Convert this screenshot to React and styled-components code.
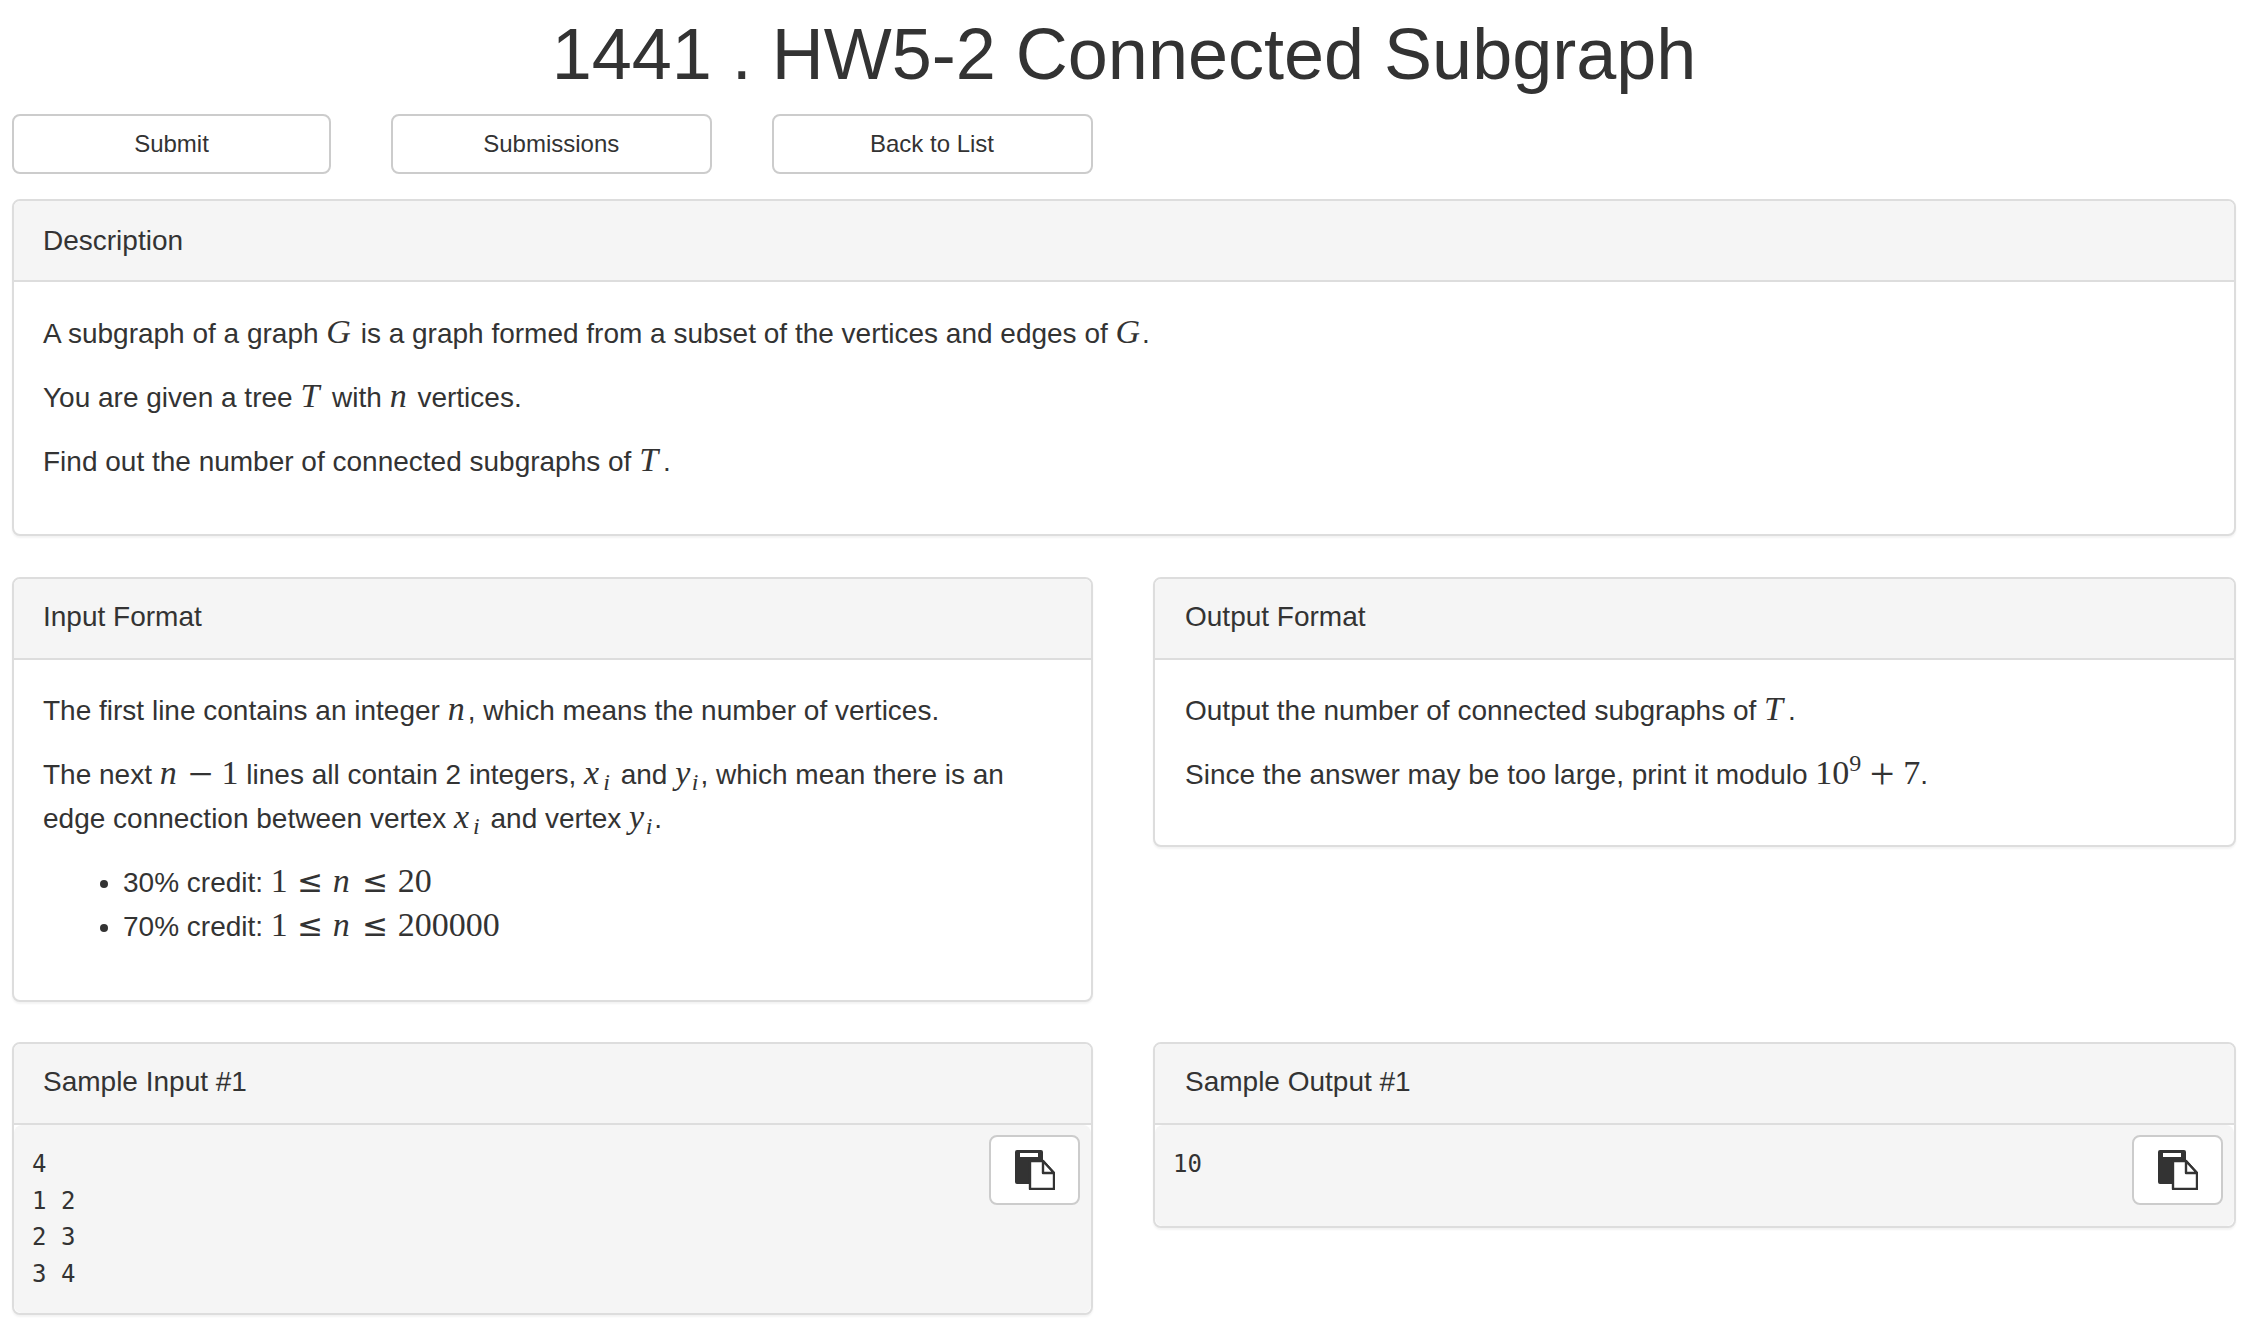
import React from "react";
import styled, { createGlobalStyle } from "styled-components";

const Global = createGlobalStyle`
  html, body { margin: 0; padding: 0; background: #fff; }
  body { font-family: "Liberation Sans", Arial, sans-serif; font-size: 28px; color: #333; }
  * { box-sizing: border-box; }
`;

const Page = styled.div`
  width: 2224px;
  margin-left: 12px;
  padding-bottom: 20px;
`;

const Title = styled.h1`
  margin: 0;
  padding-top: 15px;
  height: 114px;
  text-align: center;
  font-size: 72px;
  line-height: 79px;
  font-weight: 400;
  color: #333;
`;

const Toolbar = styled.div`
  display: grid;
  grid-template-columns: 319px 320.5px 321px;
  gap: 60px;
  width: 1081px;
  margin-bottom: 25px;
`;

const ActionButton = styled.button`
  height: 60px;
  background: #fff;
  border: 2px solid #ccc;
  border-radius: 8px;
  font: 400 24px "Liberation Sans", Arial, sans-serif;
  color: #333;
`;

const Panel = styled.section`
  background: #fff;
  border: 2px solid #ddd;
  border-radius: 8px;
  box-shadow: 0 2px 2px rgba(0, 0, 0, 0.05);
  overflow: hidden;
`;

const PanelHead = styled.h3`
  margin: 0;
  height: 81px;
  padding: 0 ${(p) => p.$inset}px;
  background: #f5f5f5;
  border-bottom: 2px solid #ddd;
  font-size: 28px;
  font-weight: 400;
  line-height: ${(p) => p.$label}px;
  color: #333;
`;

const PanelBody = styled.div`
  padding: ${(p) => p.$top}px ${(p) => p.$inset}px ${(p) => p.$bottom}px;
`;

const Para = styled.p`
  margin: 0 0 20px;
  line-height: 44px;
  white-space: nowrap;
`;

const Credits = styled.ul`
  margin: 0 0 20px;
  padding-left: 80px;
  line-height: 44px;
`;

const MathText = styled.span`
  font-family: "Liberation Serif", "DejaVu Serif", serif;
  font-size: 34px;
  line-height: 1;
  font-style: ${(p) => (p.$up ? "normal" : "italic")};
  padding-right: ${(p) => p.$pad || 0}px;
  color: #333;
`;

const Rel = styled.span`
  font-family: "Liberation Serif", "DejaVu Serif", serif;
  font-size: 44px;
  line-height: 0;
  vertical-align: -5px;
  margin: 0 8.5px;
  color: #333;
`;

const Leq = styled.span`
  font-family: "DejaVu Sans", sans-serif;
  font-size: 31px;
  line-height: 0;
  margin: 0 9.5px;
  color: #333;
`;

const Sub = styled.sub`
  font-size: 24px;
  line-height: 0;
  font-family: "Liberation Serif", serif;
  font-style: italic;
  vertical-align: -6px;
  margin-left: ${(p) => p.$shift || 0}px;
`;

const Sup = styled.sup`
  font-size: 24px;
  line-height: 0;
  font-family: "Liberation Serif", serif;
  vertical-align: 13px;
`;

const Grid = styled.div`
  display: grid;
  grid-template-columns: 1081px 1083px;
  column-gap: 60px;
  align-items: start;
`;

const Section = styled.div`
  margin-bottom: ${(p) => p.$gap}px;
`;

const CodeWrap = styled.div`
  position: relative;
`;

const Code = styled.pre`
  margin: 0;
  padding: 21px 18px 20px;
  min-height: 101px;
  background: #f5f5f5;
  border-radius: 8px;
  font-family: "DejaVu Sans Mono", monospace;
  font-size: 24px;
  line-height: 36.67px;
  color: #333;
`;

const CopyButton = styled.button`
  position: absolute;
  top: 10px;
  right: 11px;
  width: 91px;
  height: 70px;
  display: flex;
  align-items: center;
  justify-content: center;
  padding: 0;
  background: #fff;
  border: 2px solid #ccc;
  border-radius: 8px;
`;

const CopyIcon = () => (
  <svg width="40" height="40" viewBox="0 0 40 40">
    <path
      fill="#333"
      fillRule="evenodd"
      d="M2 0h24a2 2 0 0 1 2 2v30a2 2 0 0 1-2 2H2a2 2 0 0 1-2-2V2a2 2 0 0 1 2-2zM5 3v4h18V3z"
    />
    <path fill="#fff" stroke="#333" strokeWidth="2.4" strokeLinejoin="round" d="M15 11h13l11 12v16H15z" />
    <path fill="#fff" stroke="#333" strokeWidth="2.4" strokeLinejoin="round" d="M28 11v12h11z" />
  </svg>
);

const Card = ({ title, children, label = 76, inset = 29, top = 29, bottom = 31 }) => (
  <Panel>
    <PanelHead $label={label} $inset={inset}>{title}</PanelHead>
    <PanelBody $inset={inset} $top={top} $bottom={bottom}>{children}</PanelBody>
  </Panel>
);

const Sample = ({ title, text, inset = 29 }) => (
  <Panel>
    <PanelHead $label={76} $inset={inset}>{title}</PanelHead>
    <CodeWrap>
      <Code>{text}</Code>
      <CopyButton aria-label="copy">
        <CopyIcon />
      </CopyButton>
    </CodeWrap>
  </Panel>
);

const G = () => <MathText $pad={2}>G</MathText>;
const T = () => <MathText $pad={5}>T</MathText>;
const N = () => <MathText $pad={3}>n</MathText>;
const X = () => (
  <MathText $pad={3}>
    x<Sub $shift={4}>i</Sub>
  </MathText>
);
const Y = () => (
  <MathText $pad={2}>
    y<Sub $shift={1.5}>i</Sub>
  </MathText>
);

const Bound = ({ max }) => (
  <>
    <MathText $up>1</MathText>
    <Leq>≤</Leq>
    <N />
    <Leq>≤</Leq>
    <MathText $up>{max}</MathText>
  </>
);

export default function App() {
  return (
    <Page>
      <Global />
      <Title>1441 . HW5-2 Connected Subgraph</Title>
      <Toolbar>
        <ActionButton>Submit</ActionButton>
        <ActionButton>Submissions</ActionButton>
        <ActionButton>Back to List</ActionButton>
      </Toolbar>
      <Section $gap={41}>
        <Card title="Description" label={79} top={30} bottom={30}>
          <Para>
            A subgraph of a graph <G /> is a graph formed from a subset of the vertices and edges of <G />.
          </Para>
          <Para>
            You are given a tree <T /> with <N /> vertices.
          </Para>
          <Para>
            Find out the number of connected subgraphs of <T />.
          </Para>
        </Card>
      </Section>
      <Grid>
        <Section $gap={40}>
          <Card title="Input Format">
            <Para>
              The first line contains an integer <N />, which means the number of vertices.
            </Para>
            <Para>
              The next <N />
              <Rel>−</Rel>
              <MathText $up>1</MathText> lines all contain 2 integers, <X /> and <Y />, which mean there is an
              <br />
              edge connection between vertex <X /> and vertex <Y />.
            </Para>
            <Credits>
              <li>
                30% credit: <Bound max="20" />
              </li>
              <li>
                70% credit: <Bound max="200000" />
              </li>
            </Credits>
          </Card>
        </Section>
        <Section $gap={40}>
          <Card title="Output Format" inset={30} bottom={28}>
            <Para>
              Output the number of connected subgraphs of <T />.
            </Para>
            <Para>
              Since the answer may be too large, print it modulo{" "}
              <MathText $up>
                10<Sup>9</Sup>
              </MathText>
              <Rel>+</Rel>
              <MathText $up>7</MathText>.
            </Para>
          </Card>
        </Section>
        <Section $gap={0}>
          <Sample title="Sample Input #1" text={"4\n1 2\n2 3\n3 4"} />
        </Section>
        <Section $gap={0}>
          <Sample title="Sample Output #1" text={"10"} inset={30} />
        </Section>
      </Grid>
    </Page>
  );
}
